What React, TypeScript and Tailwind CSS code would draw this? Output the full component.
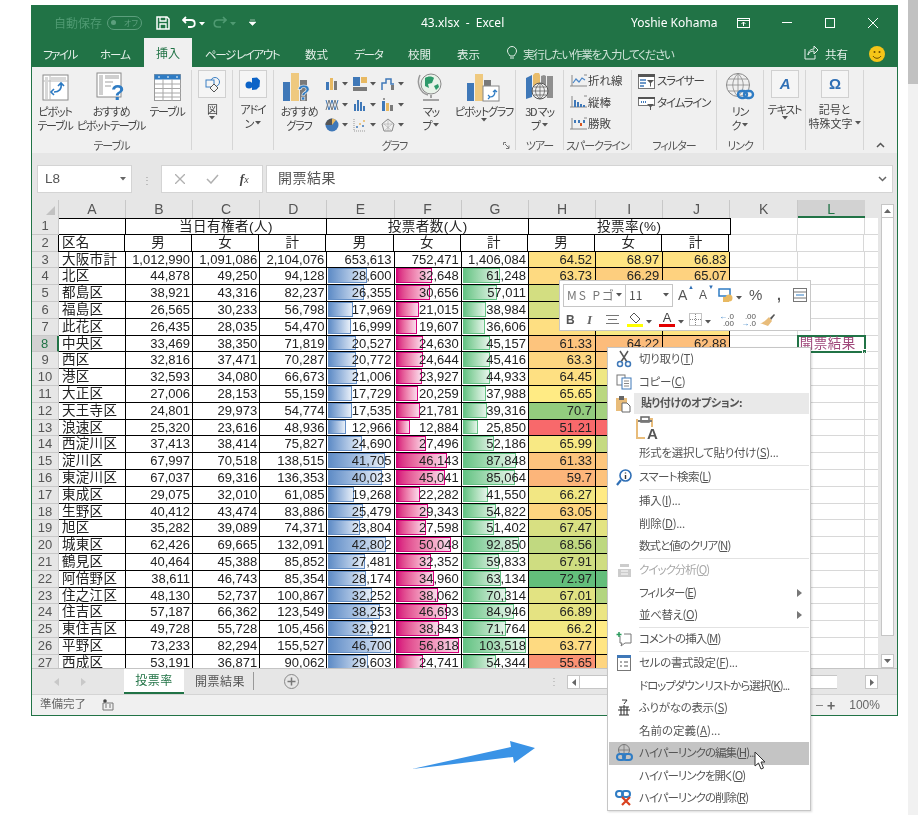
import React from "react";

const raw: [string, string, string, string, string, string, string][] = [
  ["大阪市計","1,012,990","1,091,086","2,104,076","653,613","752,471","1,406,084"],
  ["北区","44,878","49,250","94,128","28,600","32,648","61,248"],
  ["都島区","38,921","43,316","82,237","26,355","30,656","57,011"],
  ["福島区","26,565","30,233","56,798","17,969","21,015","38,984"],
  ["此花区","26,435","28,035","54,470","16,999","19,607","36,606"],
  ["中央区","33,469","38,350","71,819","20,527","24,630","45,157"],
  ["西区","32,816","37,471","70,287","20,772","24,644","45,416"],
  ["港区","32,593","34,080","66,673","21,006","23,927","44,933"],
  ["大正区","27,006","28,153","55,159","17,729","20,259","37,988"],
  ["天王寺区","24,801","29,973","54,774","17,535","21,781","39,316"],
  ["浪速区","25,320","23,616","48,936","12,966","12,884","25,850"],
  ["西淀川区","37,413","38,414","75,827","24,690","27,496","52,186"],
  ["淀川区","67,997","70,518","138,515","41,705","46,143","87,848"],
  ["東淀川区","67,037","69,316","136,353","40,023","45,041","85,064"],
  ["東成区","29,075","32,010","61,085","19,268","22,282","41,550"],
  ["生野区","40,412","43,474","83,886","25,479","29,343","54,822"],
  ["旭区","35,282","39,089","74,371","23,804","27,598","51,402"],
  ["城東区","62,426","69,665","132,091","42,802","50,048","92,850"],
  ["鶴見区","40,464","45,388","85,852","27,481","32,352","59,833"],
  ["阿倍野区","38,611","46,743","85,354","28,174","34,960","63,134"],
  ["住之江区","48,130","52,737","100,867","32,252","38,062","70,314"],
  ["住吉区","57,187","66,362","123,549","38,253","46,693","84,946"],
  ["東住吉区","49,728","55,728","105,456","32,921","38,843","71,764"],
  ["平野区","73,233","82,294","155,527","46,700","56,818","103,518"],
  ["西成区","53,191","36,871","90,062","29,603","24,741","54,344"],
];
const n = (s: string) => Number(s.replace(/,/g, ""));
const pct = (a: string, b: string) => (n(a) / n(b)) * 100;
const fmt = (v: number) => String(Number(v.toFixed(2)));

const colVals = [
  raw.map((r) => pct(r[4], r[1])),
  raw.map((r) => pct(r[5], r[2])),
  raw.map((r) => pct(r[6], r[3])),
];
const stats = colVals.map((c) => {
  const s = [...c].sort((a, b) => a - b);
  return { min: s[0], mid: s[Math.floor(s.length / 2)], max: s[s.length - 1] };
});
const mix = (a: number[], b: number[], t: number) =>
  `rgb(${a.map((x, i) => Math.round(x + (b[i] - x) * t)).join(",")})`;
const scale = (v: number, i: number) => {
  const { min, mid, max } = stats[i];
  return v < mid
    ? mix([248, 105, 107], [255, 235, 132], (v - min) / (mid - min))
    : mix([255, 235, 132], [99, 190, 123], (v - mid) / (max - mid));
};
const barMax = [46700, 56818, 103518];
const barCls = [
  "from-[#5f8cc6] to-[#e8eff8] border-[#638ec6]",
  "from-[#d6007b] to-[#f8dcec] border-[#d6007b]",
  "from-[#63c384] to-[#e6f5eb] border-[#63c384]",
];

const letters = ["A","B","C","D","E","F","G","H","I","J","K","L"];

const Caret = ({ c = "#555" }: { c?: string }) => (
  <svg width="6" height="4" viewBox="0 0 6 4" className="inline-block shrink-0"><path d="M0 0h6L3 3.5z" fill={c} /></svg>
);

/* ---------- ribbon icons ---------- */
const IconPivot = () => (
  <svg width="27" height="27" viewBox="0 0 27 27"><rect x="1" y="1" width="25" height="25" fill="#fff" stroke="#8a8a8a" /><path d="M1 7h25M8 1v25" stroke="#b8b8b8" /><path d="M3 3h3v22H3zM8 3h16v3H8z" fill="#d8d8d8" /><path d="M19 10c1 5-2 8-7 8M12 15l-3 3 3 3M16 12l3-3 3 3" fill="none" stroke="#2b79c2" strokeWidth="1.6" /></svg>
);
const IconRecPivot = () => (
  <svg width="30" height="30" viewBox="0 0 30 30"><rect x="1" y="1" width="24" height="24" fill="#fff" stroke="#8a8a8a" /><path d="M3 3h4v20H3zM9 3h14v4H9zM9 9h8v2H9zM9 13h6v2H9z" fill="#cfcfcf" /><text x="15" y="28" fontSize="22" fontWeight="700" fill="#2f7cc4" fontFamily="Liberation Sans">?</text></svg>
);
const IconTable = () => (
  <svg width="27" height="27" viewBox="0 0 27 27"><rect x=".5" y=".5" width="26" height="26" fill="#fff" stroke="#9a9a9a" /><rect x=".5" y=".5" width="26" height="5" fill="#2f7cc4" /><path d="M1 10h26M1 14.500h26M1 19h26M1 23h26M9 5v22M18 5v22" stroke="#a8a8a8" /><path d="M4 3h2M13 3h2M22 3h2" stroke="#fff" /></svg>
);
const BoxBtn = ({ children }: { children: React.ReactNode }) => (
  <div className="w-[28px] h-[28px] bg-[#f5f5f5] border border-[#d0d0d0] flex items-center justify-center">{children}</div>
);
const IconShapes = () => (
  <svg width="17" height="17" viewBox="0 0 17 17"><circle cx="11" cy="6" r="4.500" fill="none" stroke="#3a7fc4" /><rect x="2" y="4" width="8" height="7" fill="#f5f5f5" stroke="#3a7fc4" /><path d="M10 8l4 4-4 4-4-4z" fill="#f5f5f5" stroke="#555" /></svg>
);
const IconAddin = () => (
  <svg width="16" height="14" viewBox="0 0 16 14"><path d="M7 1l5-.5 3 3-.5 6-3 3-4.500.5z" fill="#0c63c7" /><circle cx="4" cy="8" r="3.500" fill="#0c63c7" /></svg>
);
const IconRecChart = () => (
  <svg width="34" height="32" viewBox="0 0 34 32"><rect x="1" y="11" width="7" height="19" fill="#3f78b8" /><rect x="9" y="2" width="8" height="28" fill="#efc97f" /><rect x="18" y="9" width="7" height="21" fill="#7a7a7a" /><text x="15" y="29" fontSize="22" fontWeight="700" fill="#2f7cc4" stroke="#f0f0f0" strokeWidth=".6" fontFamily="Liberation Sans">?</text></svg>
);
const Mini = ({ k }: { k: number }) => {
  const B = "#3f78b8", O = "#e8b962", G = "#7a7a7a";
  const inner = [
    <g key="0"><rect x="1" y="5" width="3" height="8" fill={B} /><rect x="5" y="1" width="3" height="12" fill={O} /><rect x="9" y="4" width="3" height="9" fill={G} /></g>,
    <g key="1"><rect x="0" y="0" width="7" height="9" fill={B} /><rect x="8" y="0" width="6" height="6" fill={O} /><rect x="0" y="10" width="14" height="4" fill={G} /></g>,
    <g key="2"><path d="M1 13V6h4V2h5v5h3" fill="none" stroke={B} strokeWidth="1.500" /><rect x="10" y="8" width="3" height="5" fill={G} /></g>,
    <g key="3"><path d="M1 2l3 10 3-10 3 10 3-10" fill="none" stroke={B} /><path d="M1 12l3-10 3 10 3-10 3 10" fill="none" stroke={G} /></g>,
    <g key="4"><rect x="1" y="6" width="2" height="7" fill={B} /><rect x="4" y="2" width="2" height="11" fill={B} /><rect x="7" y="4" width="2" height="9" fill={B} /><rect x="10" y="8" width="2" height="5" fill={B} /></g>,
    <g key="5"><rect x="1" y="3" width="3" height="10" fill={B} /><rect x="5" y="5" width="3" height="8" fill={O} /><rect x="9" y="7" width="3" height="6" fill={G} /><circle cx="3" cy="1" r="1" fill={G} /></g>,
    <g key="6"><circle cx="7" cy="7" r="6.500" fill={B} /><path d="M7 7V.5A6.500 6.500 0 0 0 .5 7z" fill="#555" /><path d="M7 7V.5A6.500 6.500 0 0 1 11 2z" fill={O} /></g>,
    <g key="7"><path d="M1 1v12h12" fill="none" stroke="#999" strokeDasharray="1 1" /><circle cx="4" cy="9" r="1" fill={B} /><circle cx="7" cy="6" r="1" fill={O} /><circle cx="10" cy="8" r="1" fill={B} /><circle cx="11" cy="3" r="1" fill={O} /></g>,
    <g key="8"><path d="M7 1l6 5-2 7H3L1 6z" fill="none" stroke="#888" /><path d="M7 1v12M1 6l12 0M3 13l8-7M11 13L3 6" stroke="#aaa" strokeWidth=".6" /></g>,
  ];
  return <svg width="14" height="14" viewBox="0 0 14 14">{inner[k]}</svg>;
};
const IconGlobe = () => (
  <svg width="28" height="32" viewBox="0 0 28 32"><circle cx="14" cy="13" r="10" fill="#e8f2e8" stroke="#8a8a8a" /><path d="M8 7c3-2 7-2 9 0l-2 5-4 1 1 4-4-2zM17 15l4-2 1 3-3 3z" fill="#2d9a6a" /><path d="M3 4c-4 8 0 18 8 20" fill="none" stroke="#999" strokeWidth="1.500" /><path d="M14 24v3M6 29h16" stroke="#888" strokeWidth="1.500" /></svg>
);
const IconPivotChart = () => (
  <svg width="36" height="30" viewBox="0 0 36 30"><rect x="1" y="11" width="7" height="18" fill="#3f78b8" /><rect x="9" y="2" width="8" height="27" fill="#efc97f" /><rect x="18" y="8" width="7" height="7" fill="#7a7a7a" /><rect x="17" y="14" width="16" height="15" fill="#fff" stroke="#888" /><path d="M24 25c4 0 5-2 5-6M22 23l2 2-2 2M27 20l2-2 2 2" fill="none" stroke="#2f7cc4" strokeWidth="1.200" /></svg>
);
const Icon3D = () => (
  <svg width="30" height="28" viewBox="0 0 30 28"><path d="M1 5l6-3v22l-6 2z" fill="#3f78b8" /><path d="M8 2l2-2h4l1 2v20H8z" fill="#e8bc6b" /><path d="M16 3l3-1 2 1v20h-5z" fill="#8f8f8f" /><path d="M22 3h6v22h-6z" fill="#8f8f8f" /><circle cx="15" cy="18" r="8" fill="#f0f0f0" stroke="#555" /><path d="M7 18h16M15 10v16M9 14h12M9 22h12M15 10c-6 5-6 11 0 16M15 10c6 5 6 11 0 16" fill="none" stroke="#555" strokeWidth=".7" /></svg>
);
const Spark = ({ k }: { k: number }) => (
  <svg width="17" height="14" viewBox="0 0 17 14">
    <path d="M2 1v11M0 12h17M14 1h3" stroke="#888" fill="none" />
    {k === 0 && <path d="M3 9l3-4 3 3 3-4 3 2" fill="none" stroke="#4a86c8" strokeWidth="1.200" />}
    {k === 1 && <path d="M4 5h2v7H4zM7 7h2v5H7zM10 9h2v3h-2zM13 10h2v2h-2z" fill="#3f78b8" />}
    {k === 2 && <path d="M4 3h2v3H4zM8 3h2v3H8zM13 3h2v3h-2z" fill="#3f78b8" />}
    {k === 2 && <path d="M10 6h2v3h-2z" fill="#d9541e" />}
  </svg>
);
const IconSlicer = () => (
  <svg width="17" height="15" viewBox="0 0 17 15"><rect x=".5" y=".5" width="16" height="14" fill="#fff" stroke="#777" /><rect x="0" y="0" width="17" height="3" fill="#555" /><path d="M2 6h6M2 9h6M2 12h4" stroke="#3f78b8" strokeWidth="1.500" /><path d="M9 6h7l-3 3v4l-1-1V9z" fill="#555" /></svg>
);
const IconTimeline = () => (
  <svg width="17" height="13" viewBox="0 0 17 13"><rect x=".5" y=".5" width="16" height="8" fill="#fff" stroke="#777" /><rect x="0" y="0" width="17" height="2" fill="#555" /><path d="M3 5h5" stroke="#3f78b8" strokeWidth="2" strokeDasharray="1 1" /><path d="M9 7h7l-3 3v3h-1v-3z" fill="#555" /></svg>
);
const IconLink = () => (
  <svg width="30" height="30" viewBox="0 0 30 30"><circle cx="13" cy="13" r="11.500" fill="none" stroke="#8a8a8a" /><path d="M1.500 13h23M13 1.500v23M3 7h20M3 19h20M13 1.500c-7 7-7 16 0 23M13 1.500c7 7 7 16 0 23" fill="none" stroke="#8a8a8a" strokeWidth=".8" /><rect x="13" y="19" width="9" height="7" rx="3.500" fill="none" stroke="#2f7cc4" strokeWidth="2.400" /><rect x="19" y="19" width="9" height="7" rx="3.500" fill="none" stroke="#2f7cc4" strokeWidth="2.400" /></svg>
);

/* ---------- ribbon layout ---------- */
const jp = "font-['Noto_Sans_CJK_JP','Liberation_Sans',sans-serif] [font-feature-settings:'palt']";

const Group = ({ w, label, children, launcher }: { w: string; label?: string; children?: React.ReactNode; launcher?: boolean }) => (
  <div className={`flex shrink-0 ${w}`}>
    <div className="flex-1 min-w-0 h-[86px] pt-[3px] flex flex-col">
      <div className="h-[69px] flex">{children}</div>
      <div className="h-[14px] leading-[13px] text-[11px] tracking-[-1px] whitespace-nowrap text-center text-[#555] relative">
        {label}
        {launcher && (
          <svg width="7" height="7" viewBox="0 0 7 7" className="absolute right-[5px] top-[3px]"><path d="M.5 3V.5H3M6 6.500H3M6 6.500V3.500M2 2l4 4" stroke="#777" fill="none" /></svg>
        )}
      </div>
    </div>
    <div className="w-px h-[80px] mt-[3px] bg-[#d6d6d6]" />
  </div>
);
const Big = ({ w, icon, lines, top }: { w: string; icon: React.ReactNode; lines: React.ReactNode[]; top?: boolean }) => (
  <div className={`${w} shrink-0 flex flex-col items-center text-[11px] tracking-[-1.2px] leading-[14px] text-[#444] whitespace-nowrap`}>
    {top ? <div className="h-[32px] flex items-start justify-center">{icon}</div> : <div className="h-[34px] flex items-center justify-center">{icon}</div>}
    {lines.map((l, i) => (
      <div key={i} className="flex items-center gap-[2px]">{l}</div>
    ))}
  </div>
);
const Mi = ({ k }: { k: number }) => (
  <div className="flex items-center gap-[3px] h-[20.500px]"><Mini k={k} /><Caret /></div>
);

/* ---------- context menu icons ---------- */
const Sc = () => (
  <svg width="16" height="18" viewBox="0 0 16 18"><path d="M4 1l7 11M12 1L5 12" stroke="#555" strokeWidth="1.500" /><circle cx="4" cy="14" r="2.500" fill="none" stroke="#3f78b8" strokeWidth="1.500" /><circle cx="12" cy="14" r="2.500" fill="none" stroke="#3f78b8" strokeWidth="1.500" /></svg>
);
const Cp = () => (
  <svg width="16" height="16" viewBox="0 0 16 16"><rect x="1" y="1" width="8" height="10" fill="#fff" stroke="#777" /><rect x="6" y="4" width="9" height="11" fill="#fff" stroke="#3f78b8" /><path d="M8 7h5M8 9.500h5M8 12h5" stroke="#888" /></svg>
);
const Pa = () => (
  <svg width="16" height="18" viewBox="0 0 16 18"><rect x="1" y="3" width="11" height="13" fill="#e8bc7a" /><rect x="4" y="1" width="5" height="4" fill="#666" /><path d="M7 8h5l3 3v6H7z" fill="#fff" stroke="#666" /></svg>
);
const PaBig = () => (
  <svg width="24" height="24" viewBox="0 0 24 24"><path d="M2 3v19h8M15 3h2v8" fill="none" stroke="#e8bc7a" strokeWidth="2" /><rect x="6" y="1" width="8" height="5" fill="none" stroke="#666" strokeWidth="1.500" /><path d="M3 4h14v2H3z" fill="#777" /><text x="12" y="23" fontSize="15" fontWeight="700" fill="#555" fontFamily="Liberation Sans">A</text></svg>
);
const Sm = () => (
  <svg width="16" height="17" viewBox="0 0 16 17"><circle cx="9.500" cy="6.500" r="5.500" fill="#fff" stroke="#2f6fb5" strokeWidth="1.600" /><path d="M5 11l-4 5" stroke="#2f6fb5" strokeWidth="2.200" /><path d="M9.500 3.500v1M9.500 6v4" stroke="#333" strokeWidth="1.400" /></svg>
);
const Qa = () => (
  <svg width="15" height="15" viewBox="0 0 15 15"><path d="M3 1h9v3H3zM1 6h13v8H1z" fill="#ccc" /><path d="M4 8h7M4 11h7" stroke="#fff" /></svg>
);
const Cm = () => (
  <svg width="16" height="16" viewBox="0 0 16 16"><path d="M4 5v7h2l-1 3 4-3h6V3H8" fill="none" stroke="#777" /><path d="M3 1v5M.5 3.500h5" stroke="#2a9a5c" strokeWidth="1.500" /></svg>
);
const Fc = () => (
  <svg width="14" height="16" viewBox="0 0 14 16"><rect x=".5" y=".5" width="13" height="15" fill="#fff" stroke="#777" /><rect x="0" y="0" width="14" height="3" fill="#3f78b8" /><path d="M3 7h2M3 11h2M7 7h4M7 11h4" stroke="#555" /></svg>
);
const Fu = () => (
  <svg width="14" height="18" viewBox="0 0 14 18"><path d="M5 1h5L7 5" fill="none" stroke="#333" /><path d="M2 8h10M1 11h12M4 8v8M10 8v8M2 16h10" stroke="#333" strokeWidth="1.100" /><path d="M7 6v10" stroke="#333" /></svg>
);
const Hl = () => (
  <svg width="17" height="18" viewBox="0 0 17 18"><circle cx="8" cy="6" r="5.500" fill="none" stroke="#777" /><path d="M2.500 6h11M8 .5v11" stroke="#777" strokeWidth=".8" /><rect x="1" y="10" width="8" height="6" rx="3" fill="none" stroke="#2f7cc4" strokeWidth="2" /><rect x="7" y="10" width="9" height="6" rx="3" fill="none" stroke="#2f7cc4" strokeWidth="2" /></svg>
);
const Hx = () => (
  <svg width="18" height="16" viewBox="0 0 18 16"><rect x="1" y="1" width="7" height="6" rx="3" fill="none" stroke="#2f7cc4" strokeWidth="2" /><rect x="7" y="1" width="8" height="6" rx="3" fill="none" stroke="#2f7cc4" strokeWidth="2" /><path d="M7 7l8 8M15 7l-8 8" stroke="#d9401e" strokeWidth="2.200" /></svg>
);

const Item = ({ icon, t, k, tail, dim, arrow, hl, tr = "tracking-[-0.3px]" }: { icon?: React.ReactNode; t: string; k: string; tail?: string; dim?: boolean; arrow?: boolean; hl?: boolean; tr?: string }) => (
  <div className={`h-[22.500px] flex items-center mx-px ${hl ? "bg-[#c4c4c4]" : ""} ${dim ? "text-[#a8a8a8]" : "text-[#555]"}`}>
    <div className="w-[30px] shrink-0 flex items-center justify-center">{icon}</div>
    <div className={`flex-1 whitespace-nowrap pb-[2px] ${tr}`}>{t}(<u>{k}</u>){tail}</div>
    {arrow && <svg width="5" height="8" viewBox="0 0 5 8" className="mr-[7px]"><path d="M0 0l5 4-5 4z" fill="#777" /></svg>}
  </div>
);
const Sep = () => <div className="h-[1.500px] ml-[31px] mr-px bg-[#e2e2e2]" />;
const tight = "tracking-[-1px]";

export default function App() {
  const hdrCell = "bg-[#e6e6e6] text-center text-[#555]";
  return (
    <div className={`w-[918px] h-[815px] bg-white relative overflow-hidden flex ${jp} blur-[0.45px]`}>
      <div className="w-[908px] shrink-0 pl-[31px] pt-[5px] flex flex-col">
        <div className="w-[867px] h-[711px] border-x border-b border-[#217346] flex flex-col bg-[#e6e6e6]">
          {/* title bar */}
          <div className="h-[35px] shrink-0 bg-[#217346] flex items-center text-white text-[12px]">
            <span className="ml-[22px] text-[#4f9a72] text-[12px] w-[46px] whitespace-nowrap">自動保存</span>
            <div className="ml-[7px] w-[35px] h-[14px] rounded-full border border-[#5c9f7d] flex items-center justify-between px-[3px] text-[8px] text-[#5c9f7d]">
              <span className="w-[5px] h-[5px] rounded-full bg-[#5c9f7d]" /><span>オフ</span>
            </div>
            <svg className="ml-[14px]" width="14" height="14" viewBox="0 0 14 14"><path d="M1 1h10l2 2v10H1z" fill="none" stroke="#fff" strokeWidth="1.500" /><path d="M4 1v4h6V1M4 13V8h6v5" fill="none" stroke="#fff" strokeWidth="1.300" /></svg>
            <svg className="ml-[12px]" width="14" height="13" viewBox="0 0 14 13"><path d="M1 4h8c5 0 5 7 0 7H6M4 1L1 4l3 3" fill="none" stroke="#fff" strokeWidth="1.800" /></svg>
            <span className="ml-[3px]"><Caret c="#fff" /></span>
            <svg className="ml-[8px]" width="14" height="13" viewBox="0 0 14 13"><path d="M13 4H5c-5 0-5 7 0 7h3M10 1l3 3-3 3" fill="none" stroke="#4f9a72" strokeWidth="1.600" /></svg>
            <span className="ml-[3px]"><Caret c="#4f9a72" /></span>
            <svg className="ml-[13px]" width="7" height="7" viewBox="0 0 7 7"><path d="M1 1h5M0 3h7l-3.500 3.500z" fill="#fff" stroke="#fff" strokeWidth=".5" /></svg>
            <span className="ml-[165px] w-[100px] font-['Noto_Sans',sans-serif] whitespace-nowrap">43.xlsx&nbsp; -&nbsp; Excel</span>
            <span className="ml-[110px] font-['Noto_Sans',sans-serif] whitespace-nowrap w-[85px]">Yoshie Kohama</span>
            <svg className="ml-[21px]" width="13" height="10" viewBox="0 0 13 10"><rect x=".5" y=".5" width="12" height="9" fill="none" stroke="#fff" /><path d="M1 2.500h11M6.500 8V4M4.500 6l2-2 2 2" fill="none" stroke="#fff" /></svg>
            <div className="ml-[32px] w-[10px] h-px bg-white" />
            <div className="ml-[33px] w-[10px] h-[10px] border border-white" />
            <svg className="ml-[33px]" width="10" height="10" viewBox="0 0 10 10"><path d="M0 0l10 10M10 0L0 10" stroke="#fff" /></svg>
          </div>
          {/* tabs */}
          <div className="h-[27px] shrink-0 bg-[#217346] flex items-end text-[#e4efe9] text-[11.5px] leading-[25px] whitespace-nowrap">
            <span className="ml-[11px] w-[57px] tracking-[-1.5px]">ファイル</span>
            <span className="w-[44px] tracking-[-1px]">ホーム</span>
            <div className="w-[48px] h-[29px] bg-[#f0f0f0] text-[#217346] text-center leading-[29px] text-[12px]">挿入</div>
            <span className="ml-[13px] w-[100px] tracking-[-1.4px]">ページ レイアウト</span>
            <span className="w-[49px]">数式</span>
            <span className="w-[54px] tracking-[-1.2px]">データ</span>
            <span className="w-[49px]">校閲</span>
            <span className="w-[48px]">表示</span>
            <svg className="mb-[7px] ml-[2px] mr-[6px]" width="10" height="14" viewBox="0 0 10 14"><path d="M3 10C2 8 .5 7 .5 5a4.500 4.500 0 0 1 9 0C9.500 7 8 8 7 10zM3 12h4" fill="none" stroke="#e4efe9" /></svg>
            <span className="w-[160px] text-[#cfe3d8] tracking-[-1.3px]">実行したい作業を入力してください</span>
            <svg className="ml-[121px] mb-[7px]" width="14" height="14" viewBox="0 0 14 14"><path d="M1 3v10h10V9M4 9c0-4 3-6 6-6V0l4 4-4 4V5c-3 0-5 1-6 4z" fill="none" stroke="#e4efe9" /></svg>
            <span className="ml-[7px]">共有</span>
            <svg className="ml-[21px] mb-[5px]" width="16" height="16" viewBox="0 0 16 16"><circle cx="8" cy="8" r="8" fill="#f5c518" /><circle cx="5.500" cy="6" r="1" fill="#6b4e00" /><circle cx="10.500" cy="6" r="1" fill="#6b4e00" /><path d="M4 10c2 3 6 3 8 0" fill="none" stroke="#6b4e00" /></svg>
          </div>
          {/* ribbon */}
          <div className="h-[86px] shrink-0 bg-[#f0f0f0] flex">
            <Group w="w-[160px]" label="テーブル">
              <Big w="w-[46px]" icon={<IconPivot />} lines={["ピボット", "テーブル"]} />
              <Big w="w-[66px]" icon={<IconRecPivot />} lines={["おすすめ", "ピボットテーブル"]} />
              <Big w="w-[46px]" icon={<IconTable />} lines={["テーブル"]} />
            </Group>
            <Group w="w-[41px]">
              <Big w="w-[40px]" top icon={<BoxBtn><IconShapes /></BoxBtn>} lines={["図", <Caret />]} />
            </Group>
            <Group w="w-[41px]">
              <Big w="w-[40px]" top icon={<BoxBtn><IconAddin /></BoxBtn>} lines={["アドイ", <>ン <Caret /></>]} />
            </Group>
            <Group w="w-[242px]" label="グラフ" launcher>
              <Big w="w-[50px]" icon={<IconRecChart />} lines={["おすすめ", "グラフ"]} />
              <div className="w-[85px] grid grid-cols-3 content-start pt-[4px] pl-[1px]">
                {[0,1,2,3,4,5,6,7,8].map((k) => <Mi key={k} k={k} />)}
              </div>
              <Big w="w-[44px]" icon={<IconGlobe />} lines={["マッ", <>プ <Caret /></>]} />
              <Big w="w-[62px]" icon={<IconPivotChart />} lines={["ピボットグラフ", <Caret />]} />
            </Group>
            <Group w="w-[48px]" label="ツアー">
              <Big w="w-[47px]" icon={<Icon3D />} lines={["3D マッ", <>プ <Caret /></>]} />
            </Group>
            <Group w="w-[68px]" label="スパークライン">
              <div className="pl-[6px] text-[11.500px] text-[#444]">
                {["折れ線", "縦棒", "勝敗"].map((t, i) => (
                  <div key={t} className="h-[21.500px] flex items-center gap-[1px]"><Spark k={i} />{t}</div>
                ))}
              </div>
            </Group>
            <Group w="w-[85px]" label="フィルター">
              <div className="pl-[6px] text-[11.5px] tracking-[-1.2px] text-[#444] whitespace-nowrap">
                <div className="h-[22px] flex items-center gap-[2px]"><IconSlicer />スライサー</div>
                <div className="h-[22px] flex items-center gap-[2px]"><IconTimeline />タイムライン</div>
              </div>
            </Group>
            <Group w="w-[47px]" label="リンク">
              <Big w="w-[46px]" icon={<IconLink />} lines={["リン", <>ク <Caret /></>]} />
            </Group>
            <Group w="w-[42px]">
              <Big w="w-[41px]" top icon={<BoxBtn><span className="text-[#2f6fb5] font-bold italic text-[15px] font-['Liberation_Sans']">A</span></BoxBtn>} lines={["テキスト", <Caret />]} />
            </Group>
            <Group w="w-[58px]">
              <Big w="w-[57px]" top icon={<BoxBtn><span className="text-[#2f6fb5] font-bold text-[15px] font-['Liberation_Sans']">Ω</span></BoxBtn>} lines={[<span className="tracking-[0px]">記号と</span>, <><span className="tracking-[0px]">特殊文字</span> <Caret /></>]} />
            </Group>
            <div className="flex-1 flex items-end justify-center pb-[5px]">
              <svg width="9" height="6" viewBox="0 0 9 6"><path d="M1 5l3.500-3.500L8 5" fill="none" stroke="#555" strokeWidth="1.500" /></svg>
            </div>
          </div>
          {/* formula bar */}
          <div className="h-[47px] shrink-0 bg-[#e6e6e6] flex items-start pt-[12px] pl-[5px]">
            <div className="w-[95px] h-[28px] bg-white border border-[#d4d4d4] flex items-center justify-between pl-[7px] pr-[5px] text-[13.500px] text-[#555] font-['Liberation_Sans']">
              L8<Caret c="#666" />
            </div>
            <div className="w-[29px] h-[28px] flex items-center justify-center text-[#999] text-[10px]">⋮</div>
            <div className="w-[102px] h-[28px] bg-white border border-[#d4d4d4] flex items-center justify-around px-[3px]">
              <svg width="10" height="10" viewBox="0 0 10 10"><path d="M0 0l10 10M10 0L0 10" stroke="#b0b0b0" strokeWidth="1.300" /></svg>
              <svg width="13" height="10" viewBox="0 0 13 10"><path d="M1 5l4 4 7-8" fill="none" stroke="#b0b0b0" strokeWidth="1.500" /></svg>
              <span className="font-['Liberation_Serif'] italic text-[13px] text-[#444]"><b>f</b><span className="text-[10px]">x</span></span>
            </div>
            <div className="ml-[3px] w-[627px] h-[28px] bg-white border border-[#d4d4d4] flex items-center justify-between pl-[11px] pr-[5px] text-[14px] text-[#555] tracking-[0.5px]">
              <span className="pb-[3px]">開票結果</span>
              <svg width="9" height="6" viewBox="0 0 9 6"><path d="M1 1l3.500 3.500L8 1" fill="none" stroke="#666" strokeWidth="1.500" /></svg>
            </div>
          </div>
          {/* sheet */}
          <div className="h-[468px] shrink-0 flex overflow-hidden bg-white">
            <div className="flex-1 min-w-0 overflow-hidden font-['Liberation_Sans','Noto_Sans_CJK_JP',sans-serif] text-[13px] leading-[16px] text-[#222]">
              {/* column heads */}
              <div className="flex h-[18px]">
                <div className={`w-[27px] ${hdrCell} border-r border-[#c8c8c8] flex items-end justify-end pr-[3px] pb-[3px]`}>
                  <svg width="9" height="9" viewBox="0 0 9 9"><path d="M9 0v9H0z" fill="#c2c2c2" /></svg>
                </div>
                {letters.map((l, i) => (
                  <div key={l} className={`${i === 0 ? "w-[66.8px]" : "w-[67.2px]"} text-[14px] leading-[18px] ${l === "L" ? "bg-[#d2d2d2] border-b-2 border-[#217346] text-[#217346]" : hdrCell + " border-r border-[#c8c8c8]"} text-center`}>{l}</div>
                ))}
                <div className="flex-1 bg-[#e6e6e6]" />
              </div>
              {/* row 1 */}
              <div className="flex h-[16.8px]">
                <div className={`w-[27px] ${hdrCell} border-r border-b border-[#c8c8c8]`}>1</div>
                <div className="w-[66.8px] border-t border-r border-b border-black" />
                {["当日有権者(人)", "投票者数(人)", "投票率(%)"].map((t) => (
                  <div key={t} className="w-[201.6px] border-t border-r border-b border-black text-center text-[13.500px] tracking-[0.5px] whitespace-nowrap">{t}</div>
                ))}
                <div className="w-[67.2px] border-r border-b border-[#d8d8d8]" />
                <div className="w-[67.2px] border-r border-b border-[#d8d8d8]" />
                <div className="flex-1 border-b border-[#d8d8d8]" />
              </div>
              {/* row 2 */}
              <div className="flex h-[16.8px]">
                <div className={`w-[27px] ${hdrCell} border-r border-b border-[#c8c8c8]`}>2</div>
                <div className="w-[66.8px] border-l border-r border-b border-black px-[3px] text-[13.500px] tracking-[0.3px] -ml-px">区名</div>
                {["男","女","計","男","女","計","男","女","計"].map((t, i) => (
                  <div key={i} className="w-[67.2px] border-r border-b border-black text-center text-[13.500px]">{t}</div>
                ))}
                <div className="w-[67.2px] border-r border-b border-[#d8d8d8]" />
                <div className="w-[67.2px] border-r border-b border-[#d8d8d8]" />
                <div className="flex-1 border-b border-[#d8d8d8]" />
              </div>
              {raw.map((r, ri) => {
                const rowNo = ri + 3;
                const sel = rowNo === 8;
                return (
                  <div key={rowNo} className="flex h-[16.8px]">
                    <div className={`w-[27px] text-center border-b border-[#c8c8c8] ${sel ? "bg-[#d2d2d2] text-[#217346] border-r-2 border-r-[#217346]" : "bg-[#e6e6e6] text-[#555] border-r"}`}>{rowNo}</div>
                    <div className="w-[66.8px] border-r border-b border-black pl-[3px] text-[13.500px] tracking-[0.3px] whitespace-nowrap overflow-hidden">{r[0]}</div>
                    {[1,2,3,4,5,6].map((c) => {
                      const bi = c - 4;
                      return (
                        <div key={c} className="w-[67.2px] relative border-r border-b border-black text-right pr-[2px] whitespace-nowrap">
                          {bi >= 0 && ri > 0 && (
                            <div className={`absolute left-px top-0 bottom-px border bg-gradient-to-r ${barCls[bi]}`} style={{ width: `${(n(r[c]) / barMax[bi]) * 63}px` }} />
                          )}
                          <span className="relative">{r[c]}</span>
                        </div>
                      );
                    })}
                    {colVals.map((col, i) => (
                      <div key={i} className="w-[67.2px] border-r border-b border-black text-right pr-[3px]" style={{ backgroundColor: scale(col[ri], i) }}>{fmt(col[ri])}</div>
                    ))}
                    <div className="w-[67.2px] border-r border-b border-[#d8d8d8]" />
                    <div className="w-[67.2px] relative border-r border-b border-[#d8d8d8]">
                      {sel && (
                        <div className="absolute -left-px -top-px w-[69px] h-[18px] border-2 border-[#217346] pl-[1px] leading-[14px] text-[13.500px] tracking-[0.5px] text-[#a04a7c] whitespace-nowrap">
                          開票結果
                          <div className="absolute -right-[3px] -bottom-[3px] w-[5px] h-[5px] bg-[#217346] border border-white" />
                        </div>
                      )}
                    </div>
                    <div className="flex-1 border-b border-[#d8d8d8]" />
                  </div>
                );
              })}
            </div>
            {/* vertical scrollbar */}
            <div className="w-[19px] shrink-0 bg-[#e6e6e6] pt-[4px] pl-[3px] flex flex-col">
              <div className="w-[13px] h-[14px] bg-white border border-[#c6c6c6] flex items-center justify-center"><svg width="7" height="4" viewBox="0 0 7 4"><path d="M0 4l3.500-4L7 4z" fill="#666" /></svg></div>
              <div className="w-[13px] h-[419px] bg-white border border-[#c6c6c6] border-t-0" />
              <div className="mt-[18px] w-[13px] h-[14px] bg-white border border-[#c6c6c6] flex items-center justify-center"><svg width="7" height="4" viewBox="0 0 7 4"><path d="M0 0l3.500 4L7 0z" fill="#666" /></svg></div>
            </div>
          </div>
          {/* sheet tabs */}
          <div className="h-[26px] shrink-0 bg-[#e6e6e6] border-t border-[#c4c4c4] flex items-start text-[12px]">
            <svg className="ml-[22px] mt-[9px]" width="5" height="8" viewBox="0 0 5 8"><path d="M5 0L0 4l5 4z" fill="#c8c8c8" /></svg>
            <svg className="ml-[22px] mt-[9px]" width="5" height="8" viewBox="0 0 5 8"><path d="M0 0l5 4-5 4z" fill="#c8c8c8" /></svg>
            <div className="ml-[38px] w-[60px] h-[25px] bg-white border-b-2 border-[#217346] text-[#217346] text-center leading-[22px] tracking-[0.5px]">投票率</div>
            <div className="ml-[11px] w-[50px] leading-[23px] text-[#555] tracking-[0.5px] whitespace-nowrap">開票結果</div>
            <div className="ml-[8px] w-px h-[18px] mt-[3px] bg-[#999]" />
            <svg className="ml-[30px] mt-[5px]" width="15" height="15" viewBox="0 0 15 15"><circle cx="7.500" cy="7.500" r="7" fill="none" stroke="#888" /><path d="M7.500 3.500v8M3.500 7.500h8" stroke="#777" strokeWidth="1.500" /></svg>
            <div className="ml-[250px] mt-[6px] text-[#aaa] text-[10px] leading-[12px]">⋮</div>
            <div className="ml-[8px] mt-[6px] w-[13px] h-[14px] bg-white border border-[#c6c6c6] flex items-center justify-center"><svg width="4" height="7" viewBox="0 0 4 7"><path d="M4 0L0 3.500 4 7z" fill="#666" /></svg></div>
            <div className="mt-[6px] w-[257px] h-[14px] bg-white border-y border-[#c6c6c6]" />
            <div className="mt-[6px] w-[28px] h-[14px]" />
            <div className="mt-[6px] w-[13px] h-[14px] bg-white border border-[#c6c6c6] flex items-center justify-center"><svg width="4" height="7" viewBox="0 0 4 7"><path d="M0 0l4 3.500L0 7z" fill="#666" /></svg></div>
          </div>
          {/* status bar */}
          <div className="flex-1 bg-[#f0f0f0] border-t border-[#d4d4d4] flex items-center text-[11.500px] text-[#666]">
            <span className="ml-[8px] w-[62px] pb-[2px]">準備完了</span>
            <svg width="12" height="12" viewBox="0 0 12 12"><path d="M1 4h10v7H1z" fill="none" stroke="#777" /><path d="M3 6h2M7 6h2M3 8h2M7 8h2" stroke="#777" /><circle cx="3" cy="2" r="1.800" fill="#444" /></svg>
            <div className="ml-[702px] w-[7px] h-px bg-[#888]" />
            <span className="ml-[4px] text-[14px] font-bold text-[#666] leading-none">+</span>
            <span className="ml-[14px] font-['Liberation_Sans'] text-[12px]">100%</span>
          </div>
        </div>
        {/* annotation arrow */}
        <svg className="ml-[379px] mt-[24px]" width="125" height="30" viewBox="0 0 125 30">
          <polygon points="2,29 101,7 100,1 125,8 104,23 103,17" fill="#3a93e6" />
        </svg>
      </div>
      {/* page scrollbar */}
      <div className="w-[10px] h-full bg-[#f1f1f1]"><div className="h-[84px] bg-[#c1c1c1]" /></div>

      {/* mini toolbar */}
      <div className="absolute left-[559px] top-[280px] w-[252px] h-[51px] bg-white border border-[#c8c8c8] text-[#444] z-10">
        <div className="flex items-center h-[26px] pl-[3px] pt-[2px]">
          <div className="w-[63px] h-[23px] border border-[#c6c6c6] flex items-center justify-between px-[3px] text-[12px] text-[#777] tracking-[2px] whitespace-nowrap">MS Pゴ<Caret /></div>
          <div className="w-[47px] h-[23px] border border-l-0 border-[#c6c6c6] flex items-center justify-between px-[3px] text-[12px] text-[#555]">11<Caret /></div>
          <span className="ml-[5px] text-[14px] font-['Liberation_Sans'] text-[#555] relative w-[20px]">A<span className="absolute top-[-2px] left-[10px] text-[6px] text-[#2f6fb5]">▲</span></span>
          <span className="text-[12px] font-['Liberation_Sans'] text-[#555] relative w-[20px] pl-[1px]">A<span className="absolute top-[-3px] left-[10px] text-[6px] text-[#2f6fb5]">▼</span></span>
          <svg width="15" height="15" viewBox="0 0 15 15"><rect x="1" y="1" width="11" height="7" fill="#fff" stroke="#2f7cc4" strokeWidth="1.500" /><circle cx="11" cy="10" r="3.500" fill="#e8b962" /><rect x="5" y="9" width="6" height="5" fill="#e8b962" /></svg>
          <span className="ml-[3px]"><Caret /></span>
          <span className="ml-[7px] text-[15px] font-['Liberation_Sans'] text-[#555] w-[20px]">%</span>
          <span className="text-[14px] font-bold font-['Liberation_Sans'] text-[#555] w-[20px] text-center">,</span>
          <svg width="14" height="14" viewBox="0 0 14 14" className="ml-[4px]"><rect x=".5" y=".5" width="13" height="13" fill="#fff" stroke="#777" /><path d="M1 4h12M1 10h12" stroke="#777" /><path d="M3 7h8" stroke="#2f7cc4" /></svg>
        </div>
        <div className="flex items-center h-[24px] pl-[6px] pt-[1px]">
          <span className="w-[21px] font-bold font-['Liberation_Sans'] text-[12px] text-[#555]">B</span>
          <span className="w-[19px] italic font-['Liberation_Serif'] text-[13px] font-bold text-[#666]">I</span>
          <svg width="13" height="9" viewBox="0 0 13 9"><path d="M0 .5h13M2 4.500h9M0 8.500h13" stroke="#777" /></svg>
          <div className="ml-[8px] w-[16px] flex flex-col items-center">
            <svg width="13" height="11" viewBox="0 0 13 11"><path d="M5 0l6 6-4 4-6-6z" fill="#fff" stroke="#555" /></svg>
            <div className="w-[16px] h-[3px] bg-[#ffff00]" />
          </div>
          <span className="ml-[3px]"><Caret /></span>
          <div className="ml-[7px] w-[16px] flex flex-col items-center text-[13px] leading-[12px] font-['Liberation_Sans'] text-[#444]">
            A<div className="w-[16px] h-[3px] bg-[#e30000]" />
          </div>
          <span className="ml-[3px]"><Caret /></span>
          <svg className="ml-[5px]" width="13" height="13" viewBox="0 0 13 13"><rect x=".5" y=".5" width="12" height="12" fill="none" stroke="#888" strokeDasharray="1 1" /><path d="M6.500 1v11M1 6.500h11" stroke="#888" strokeDasharray="1 1" /></svg>
          <span className="ml-[3px]"><Caret /></span>
          <span className="ml-[5px] w-[18px] text-[8px] leading-[7px] text-[#555] font-['Liberation_Sans'] text-right"><span className="text-[#2f7cc4]">←</span>.0<br />.00</span>
          <span className="ml-[4px] w-[18px] text-[8px] leading-[7px] text-[#555] font-['Liberation_Sans'] text-right">.00<br /><span className="text-[#2f7cc4]">→</span>.0</span>
          <svg className="ml-[4px]" width="16" height="15" viewBox="0 0 16 15"><path d="M10 6l4-4 1 1-4 5z" fill="#555" /><path d="M9 5l3 4-4 5-8-3c3 0 6-3 9-6z" fill="#e8bc7a" /></svg>
        </div>
      </div>

      {/* context menu */}
      <div className="absolute left-[607px] top-[347px] w-[204px] h-[464px] bg-white border border-[#c6c6c6] shadow-[1px_1px_2px_rgba(0,0,0,0.15)] text-[11.500px] leading-[18px] z-10">
        <Item icon={<Sc />} t="切り取り" k="T" />
        <Item icon={<Cp />} t="コピー" k="C" />
        <div className="h-[21px] flex items-center mx-px">
          <div className="w-[23px] flex items-center justify-center shrink-0 ml-[2px]"><Pa /></div>
          <div className="flex-1 h-full bg-[#e9e9e9] pl-[7px] font-bold text-[#555] text-[11px] leading-[18px] tracking-[-0.4px]">貼り付けのオプション:</div>
        </div>
        <div className="h-[28px] pl-[27px] flex items-center"><PaBig /></div>
        <Item t="形式を選択して貼り付け" k="S" tail="..." />
        <Sep />
        <Item icon={<Sm />} t="スマート検索" k="L" tr="tracking-[-0.6px]" />
        <Sep />
        <Item t="挿入" k="I" tail="..." />
        <Item t="削除" k="D" tail="..." />
        <Item t="数式と値のクリア" k="N" tr={tight} />
        <Sep />
        <Item icon={<Qa />} t="クイック分析" k="Q" dim tr={tight} />
        <Item t="フィルター" k="E" arrow tr={tight} />
        <Item t="並べ替え" k="O" arrow tr="tracking-[-0.4px]" />
        <Sep />
        <Item icon={<Cm />} t="コメントの挿入" k="M" tr={tight} />
        <Sep />
        <Item icon={<Fc />} t="セルの書式設定" k="F" tail="..." />
        <Item t="ドロップダウン リストから選択" k="K" tail="..." tr={tight} />
        <Item icon={<Fu />} t="ふりがなの表示" k="S" />
        <Item t="名前の定義" k="A" tail="..." tr="tracking-[0px]" />
        <Item icon={<Hl />} t="ハイパーリンクの編集" k="H" tail="..." hl tr={tight} />
        <Item t="ハイパーリンクを開く" k="O" tr={tight} />
        <Item icon={<Hx />} t="ハイパーリンクの削除" k="R" tr={tight} />
      </div>
      {/* cursor */}
      <svg className="absolute left-[754px] top-[751px] z-20" width="13" height="20" viewBox="0 0 13 20"><path d="M1 1v14l3.500-3 2.500 6 2.500-1-2.500-6H11z" fill="#fff" stroke="#333" /></svg>
    </div>
  );
}
